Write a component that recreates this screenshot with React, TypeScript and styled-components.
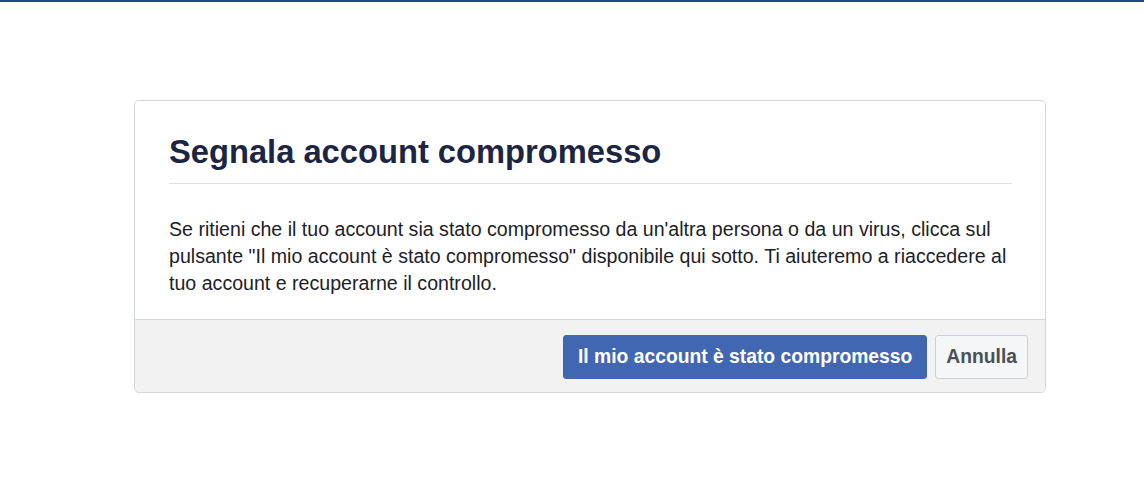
import { createGlobalStyle } from 'styled-components';
import styled from 'styled-components';

const GlobalStyle = createGlobalStyle`
  html, body {
    margin: 0;
    padding: 0;
    background: #fff;
    font-family: "Liberation Sans", Arial, sans-serif;
  }
`;

const Page = styled.div`
  border-top: 2px solid #244494;
  min-height: 498px;
  padding-top: 98px;
  box-sizing: border-box;
`;

const Card = styled.div`
  width: 912px;
  margin-left: 134px;
  border: 1px solid #d3d6db;
  border-radius: 5px;
  overflow: hidden;
  box-sizing: border-box;
`;

const Body = styled.div`
  padding: 32px 33px 22px 34px;
`;

const Title = styled.h2`
  margin: 0;
  padding-bottom: 12px;
  border-bottom: 1px solid #dddfe2;
  font-size: 32.7px;
  font-weight: bold;
  color: #1c2642;
  line-height: 38px;
`;

const Text = styled.p`
  margin: 32px 0 0;
  font-size: 19.6px;
  line-height: 27px;
  color: #1d2129;
`;

const Footer = styled.div`
  display: flex;
  justify-content: flex-end;
  gap: 8px;
  padding: 15px 17px 13px;
  background: #f2f2f2;
  border-top: 1px solid #d3d6db;
`;

const Button = styled.button<{ $primary?: boolean }>`
  height: 44px;
  padding: 0 ${(p) => (p.$primary ? '14px' : '10px')};
  border-radius: 3px;
  font-family: "Liberation Sans", Arial, sans-serif;
  font-size: 19.3px;
  font-weight: bold;
  cursor: pointer;
  border: 1px solid ${(p) => (p.$primary ? '#4267b2' : '#ccd0d5')};
  background: ${(p) => (p.$primary ? '#4267b2' : '#f5f6f7')};
  color: ${(p) => (p.$primary ? '#fff' : '#4b4f56')};
`;

export default function App() {
  return (
    <>
      <GlobalStyle />
      <Page>
        <Card>
          <Body>
            <Title>Segnala account compromesso</Title>
            <Text>
              Se ritieni che il tuo account sia stato compromesso da un'altra persona o da un virus, clicca sul
              pulsante "Il mio account è stato compromesso" disponibile qui sotto. Ti aiuteremo a riaccedere al
              tuo account e recuperarne il controllo.
            </Text>
          </Body>
          <Footer>
            <Button $primary>Il mio account è stato compromesso</Button>
            <Button>Annulla</Button>
          </Footer>
        </Card>
      </Page>
    </>
  );
}
